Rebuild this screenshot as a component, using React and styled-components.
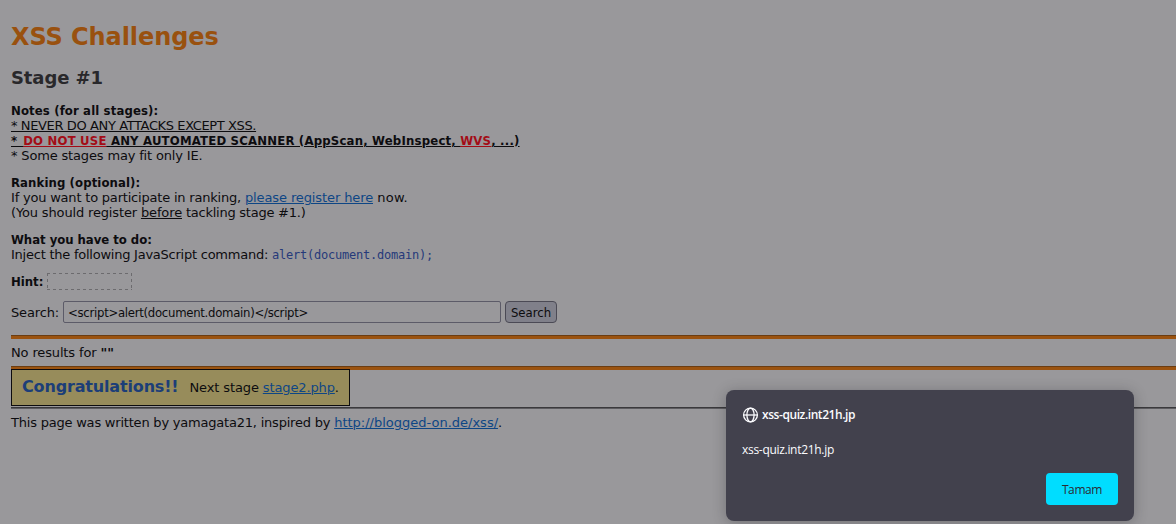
import React from "react";
import styled, { createGlobalStyle } from "styled-components";

const GlobalStyle = createGlobalStyle`
  * { box-sizing: border-box; }
  body {
    margin: 0;
    background: #99989b;
    color: #0d0c0f;
    font: 13px/15px "DejaVu Sans", sans-serif;
    overflow: hidden;
  }
`;

const Page = styled.main`
  height: 524px;
  padding: 23px 0 0 11px;
  white-space: pre;
`;

const Title = styled.h1`
  margin: 0;
  font-size: 24px;
  line-height: 28px;
  letter-spacing: -0.08px;
  color: #99510f;
`;

const Stage = styled.h2`
  margin: 16px 0 15px;
  font-size: 18px;
  line-height: 21px;
  letter-spacing: -0.1px;
  color: #29282b;
`;

const Paragraph = styled.section`
  margin-bottom: 12px;
`;

const Line = styled.div`
  height: 15px;
  letter-spacing: ${(p) => p.$track || 0}px;
`;

const Strong = styled.b`
  font-family: "DejaVu Sans Condensed", "DejaVu Sans", sans-serif;
  font-stretch: condensed;
  letter-spacing: ${(p) => p.$track || 0}px;
`;

const Text = styled.span`
  letter-spacing: ${(p) => p.$track || 0}px;
`;

const Underlined = styled.u`
  letter-spacing: ${(p) => p.$track || 0}px;
  text-underline-offset: 1px;
  text-decoration-thickness: 1px;
`;

const Warning = styled.span`
  color: #a30c16;
  text-decoration: underline 1px;
  text-underline-offset: 1px;
`;

const Link = styled.a`
  color: #0e4685;
  letter-spacing: ${(p) => p.$track || 0}px;
  text-decoration: underline 1px;
  text-underline-offset: 1px;
`;

const Code = styled.code`
  font: 12px/15px "DejaVu Sans Mono", monospace;
  letter-spacing: -0.22px;
  color: #263a7a;
`;

const HintRow = styled.div`
  display: flex;
  align-items: center;
  gap: 4px;
  height: 17px;
  margin-top: -1px;
`;

const HintBox = styled.span`
  width: 85px;
  height: 17px;
  --dash: #6c6b6e 0 3px, transparent 3px 6px;
  background:
    repeating-linear-gradient(90deg, var(--dash)) 0 0 / 100% 1px no-repeat,
    repeating-linear-gradient(90deg, var(--dash)) 0 100% / 100% 1px no-repeat,
    repeating-linear-gradient(180deg, var(--dash)) 0 0 / 1px 100% no-repeat,
    repeating-linear-gradient(180deg, var(--dash)) 100% 0 / 1px 100% no-repeat;
`;

const SearchForm = styled.form`
  display: flex;
  align-items: center;
  gap: 4px;
  height: 22px;
  margin: 11px 0 12px;
`;

const Label = styled.label`
  width: 48px;
  letter-spacing: -0.15px;
`;

const Input = styled.input`
  width: 438px;
  height: 22px;
  padding: 1px 4px;
  border: 1px solid #5c5b68;
  border-radius: 2px;
  background: #99989b;
  color: #0d0c0f;
  font: 13px "DejaVu Sans Condensed", "DejaVu Sans", sans-serif;
  font-stretch: condensed;
  letter-spacing: -0.28px;
`;

const SearchButton = styled.button`
  width: 52px;
  height: 22px;
  padding: 0;
  border: 1px solid #4b4a55;
  border-radius: 4px;
  background: #80808a;
  color: #0d0c0f;
  font: 13px "DejaVu Sans Condensed", "DejaVu Sans", sans-serif;
  font-stretch: condensed;
`;

const Rule = styled.hr`
  height: ${(p) => (p.$thin ? 2 : 4)}px;
  margin: 0;
  border: 0;
  border-top: 1px solid ${(p) => (p.$thin ? "#3a393c" : "#6b3d12")};
  background: ${(p) => (p.$thin ? "#5d5c60" : "#9b5310")};
`;

const Results = styled.div`
  padding: 6px 0;
`;

const Success = styled.div`
  position: relative;
  display: flex;
  align-items: baseline;
  width: 339px;
  height: 37px;
  margin: -1px 0 1px;
  padding: 7px 10px 0;
  border: 1px solid #0d0c0f;
  background: #978c5b;
`;

const Congrats = styled.b`
  width: 168px;
  font-size: 16px;
  line-height: 19px;
  letter-spacing: -0.16px;
  color: #1c3e78;
`;

const Footer = styled.footer`
  padding-top: 6px;
`;

const Dialog = styled.div`
  position: absolute;
  left: 726px;
  top: 390px;
  display: flex;
  flex-direction: column;
  width: 408px;
  height: 131px;
  padding: 16px;
  border-radius: 8px;
  background: #42414d;
  box-shadow: 0 2px 14px rgba(28, 27, 34, 0.3);
  color: #fbfbfe;
  font: 12px/16px "Open Sans", sans-serif;
`;

const DialogTitle = styled.div`
  display: flex;
  align-items: center;
  gap: 3px;
  height: 17px;
  font-weight: 600;
  letter-spacing: -0.43px;
`;

const DialogBody = styled.div`
  margin-top: 19px;
  letter-spacing: -0.3px;
`;

const ConfirmButton = styled.button`
  align-self: flex-end;
  width: 72px;
  height: 32px;
  margin-top: auto;
  padding: 1px 0 0;
  border: 0;
  border-radius: 4px;
  background: #00ddff;
  color: #2b2a33;
  font: 12px "Open Sans", sans-serif;
  letter-spacing: -0.4px;
`;

const GlobeIcon = () => (
  <svg width="17" height="16" viewBox="0 0 17 16" fill="none" stroke="#fbfbfe" strokeWidth="1.3">
    <circle cx="8.5" cy="8" r="6.9" />
    <ellipse cx="8.5" cy="8" rx="3.6" ry="6.9" />
    <path d="M1.6 8h13.8" />
  </svg>
);

export default function App() {
  return (
    <>
      <GlobalStyle />
      <Page>
        <Title>XSS Challenges</Title>
        <Stage>Stage #1</Stage>
        <Paragraph>
          <Line><Strong $track={0.13}>Notes (for all stages):</Strong></Line>
          <Line><Underlined $track={-0.38}>* NEVER DO ANY ATTACKS EXCEPT XSS.</Underlined></Line>
          <Line>
            <Strong>
              <Underlined $track={0.2}>
                <Text $track={1}>* </Text><Warning>DO NOT USE</Warning> ANY AUTOMATED SCANNER (AppScan, WebInspect, <Warning>WVS</Warning>, ...)
              </Underlined>
            </Strong>
          </Line>
          <Line $track={-0.16}>* Some stages may fit only IE.</Line>
        </Paragraph>
        <Paragraph>
          <Line><Strong $track={0.1}>Ranking (optional):</Strong></Line>
          <Line>
            <Text $track={-0.2}>If you want to participate in ranking, </Text>
            <Link $track={-0.11}>please register here</Link>
            <Text $track={0.2}> now.</Text>
          </Line>
          <Line>
            <Text $track={-0.15}>(You should register </Text>
            <Underlined $track={-0.13}>before</Underlined>
            <Text $track={-0.24}> tackling stage #1.)</Text>
          </Line>
        </Paragraph>
        <Paragraph>
          <Line><Strong $track={-0.03}>What you have to do:</Strong></Line>
          <Line>
            <Text $track={-0.24}>Inject the following JavaScript command: </Text>
            <Code>alert(document.domain);</Code>
          </Line>
        </Paragraph>
        <HintRow>
          <Strong>Hint:</Strong>
          <HintBox />
        </HintRow>
        <SearchForm>
          <Label>Search:</Label>
          <Input defaultValue="<script>alert(document.domain)</script>" />
          <SearchButton type="button">Search</SearchButton>
        </SearchForm>
        <Rule />
        <Results>
          <Text $track={-0.14}>No results for </Text><b>""</b>
        </Results>
        <Rule />
        <Success>
          <Congrats>Congratulations!!</Congrats>
          <Text $track={-0.12}>Next stage </Text>
          <Link $track={-0.12}>stage2.php</Link>.
        </Success>
        <Rule $thin />
        <Footer>
          <Text $track={-0.21}>This page was written by yamagata21, inspired by </Text>
          <Link>http://blogged-on.de/xss/</Link>.
        </Footer>
      </Page>
      <Dialog role="dialog">
        <DialogTitle><GlobeIcon />xss-quiz.int21h.jp</DialogTitle>
        <DialogBody>xss-quiz.int21h.jp</DialogBody>
        <ConfirmButton>Tamam</ConfirmButton>
      </Dialog>
    </>
  );
}
